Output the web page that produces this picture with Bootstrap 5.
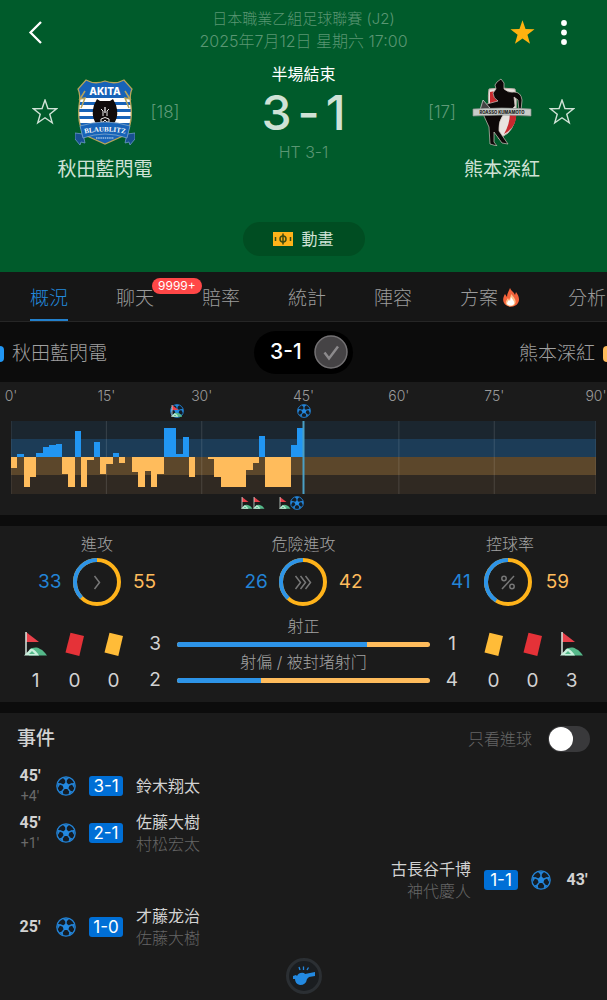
<!DOCTYPE html>
<html lang="zh-Hant">
<head>
<meta charset="utf-8">
<meta name="viewport" content="width=device-width, initial-scale=1">
<title>秋田藍閃電 3-1 熊本深紅</title>
<link href="https://cdn.jsdelivr.net/npm/bootstrap@5.3.0/dist/css/bootstrap.min.css" rel="stylesheet">
<style>
:root{--home:#2196f3;--away:#ffbc5c;--panel:#1b1b1b;--gap:#0c0c0c}
body{background:var(--panel);color:#d2d2d2;font-family:Inter,"Noto Sans CJK TC",sans-serif;font-size:16px;line-height:20px;font-weight:400;overflow-x:hidden}
svg{display:block;flex:none}
.icon-btn{background:none;border:0;padding:0;color:inherit;display:flex;align-items:center;justify-content:center}
/* header */
.match-head{background:#005b2b;color:#cfe2d6;height:272px}
.head-side{width:98px}
.league{font-size:15px;line-height:22px;color:#5a9673;font-weight:300}
.league .kickoff{font-size:16px}
.score-row{padding:0 15px;margin-top:12px}
.team-block{width:180px;padding-top:14px}
.team-block .cell{width:60px}
.rank{color:#5f9a78;font-size:17px;font-weight:300}
.team-name{font-size:19px;line-height:24px;margin-top:12px}
.big-score{font-size:48px;line-height:58px;font-weight:500;gap:6px}
.ht{color:#5a9673;font-weight:300}
.anim-btn{background:#004d22;color:#cfe2d6;border:0;border-radius:17px;width:122px;height:34px}
/* tabs */
.tab-strip{background:#161616;border-bottom:1px solid #262626;height:50px;gap:48px;padding-left:30px;overflow:hidden;white-space:nowrap}
.tab-strip a{position:relative;color:#9b9b9b;font-size:19px;line-height:24px;height:50px;padding-top:15px;text-decoration:none;flex:none;font-weight:300}
.tab-strip a.active{color:#2389dc;border-bottom:3px solid #2380cc}
.count-pill{position:absolute;left:36px;top:6px;height:16px;padding:0 6px;border-radius:8px;background:#ff4747;color:#fff;font-size:12px;line-height:16px;font-weight:400}
/* teams bar */
.teams-bar{background:var(--gap);height:60px;color:#a0a0a0;font-size:19px;line-height:24px;font-weight:300}
.teams-bar .side{padding-top:3px}
.tick{width:4px;height:16px}
.tick-home{background:var(--home);border-radius:0 4px 4px 0}
.tick-away{background:var(--away);border-radius:4px 0 0 4px}
.score-pill{background:#000;border-radius:22px;width:99px;height:43px;color:#fff;font-size:21px;font-weight:500}
/* chart */
.momentum{padding:4px 11px 21px}
.axis{display:grid;grid-template-columns:minmax(0,15fr) minmax(0,15fr) minmax(0,16fr) minmax(0,15fr) minmax(0,15fr) minmax(0,16fr) 0;font-size:14px;color:#9a9a9a;font-weight:300}
.axis span{width:30px;margin-left:-15px;text-align:center}
.plot{position:relative;margin-top:15px}
.plot>svg{width:100%;height:73px}
.marks svg{position:absolute;margin-left:-7px}
.marks .up{top:-17px}
.marks .down{top:75px}
.section-gap{background:var(--gap);height:11px}
/* stats */
.stats{padding:8px 0 11px;color:#a3a3a3;font-weight:300}
.rings{padding:0 38px}
.ring-block{width:118px}
.val{font-size:19px;line-height:24px;font-weight:400}
.val-home{color:#2384d6}
.val-away{color:var(--away)}
.tallies{padding:10px 16px 0}
.tally-group{padding-top:15px;text-align:center}
.tally{width:39px}
.tally svg{margin-bottom:12px}
.tally span,.meter-num{font-size:19px;line-height:24px;color:#d2d2d2;font-weight:400}
.tally span{display:block;height:22px}
.meter-num{width:44px;line-height:16px;text-align:center}
.meter-label{text-align:center}
.meter .progress{height:5px;border-radius:3px;background:var(--away)}
/* events */
.events{padding:13px 17px 4px}
.events h2{font-size:19px;line-height:26px;font-weight:500;margin:0;color:#d2d2d2}
.only-goals label{color:#666;font-weight:300}
.only-goals input.form-check-input{width:42px;height:26px;margin:0;border:0;background-color:#39393b;box-shadow:none;float:none;
background-image:url("data:image/svg+xml,%3csvg xmlns='http://www.w3.org/2000/svg' viewBox='-4 -4 8 8'%3e%3ccircle r='3.7' fill='%23fff'/%3e%3c/svg%3e")}
.event-list{margin-top:10px}
.event{height:47px;gap:13px}
.event time{width:26px;text-align:center;font-family:Roboto,sans-serif;font-weight:700;font-size:16px}
.event small{display:block;font-size:14px;font-weight:400;color:#6a6a6a}
.score-tag{background:#006fd6;color:#fff;border-radius:3px;width:34px;height:20px;text-align:center;font-size:17px;line-height:20px}
.names{line-height:22px}
.names div+div{color:#666;font-weight:300}
.whistle{width:36px;height:36px;border-radius:50%;border:3px solid #2b2f33;background:#1a1d20}
</style>
</head>
<body>
<svg width="0" height="0" class="position-absolute" aria-hidden="true">
  <defs>
    <symbol id="ball" viewBox="0 0 20 20">
      <circle cx="10" cy="10" r="9.2" fill="#141c24" stroke="#2383d6" stroke-width="1.3"/>
      <path d="M10 6.300l3.600 2.600-1.400 4.200H7.800L6.400 8.900z" fill="#2389e0"/>
      <path d="M10 7V4M13 9l3.200-1.200M12 12.700l2 2.700M8 12.700l-2 2.700M7 9L3.800 7.800" fill="none" stroke="#2383d6" stroke-width="1.500"/>
      <path d="M6.500 1.500h7L10 5zM18.700 6.500l-.3 6-3-4.900zM1.300 6.500l.3 6 3-4.900zM17 15.500l-4.500 3.300.9-4.400zM3 15.500l4.500 3.300-.9-4.400z" fill="#2383d6"/>
    </symbol>
    <symbol id="corner" viewBox="0 0 24 24">
      <path d="M2 0l13 10H2z" fill="#e8404a"/>
      <path d="M2 0v23" stroke="#d8e8e0" stroke-width="1.500"/>
      <path d="M5 18c4-3 8-3 11-1 3 1 5 4 7 6.500H5z" fill="#55b98a"/>
      <path d="M0 23.500l7-7c4 1 6 4 8 7z" fill="#c9f0dd"/>
      <path d="M5 22l3-3 3 3z" fill="#55b98a"/>
    </symbol>
    <symbol id="cardface" viewBox="0 0 24 24"><path d="M7.500 .7L21 4 16.300 24 2.500 20.600z" fill="currentColor"/></symbol>
    <symbol id="star" viewBox="0 0 24 24"><path d="M12 1l2.700 7.800 8 .2-6.300 5 2.300 8L12 17.300 5.300 22l2.300-8-6.300-5 8-.2z"/></symbol>
  </defs>
</svg>

<header class="match-head d-flex flex-column">
  <div class="d-flex justify-content-between align-items-start pt-2">
    <div class="head-side ps-4 pt-2">
      <button class="icon-btn" aria-label="返回"><svg width="24" height="32" viewBox="0 0 24 32"><path d="M17 6L6.500 16.500 17 27" fill="none" stroke="#fff" stroke-width="2.300"/></svg></button>
    </div>
    <div class="league text-center"><div>日本職業乙組足球聯賽 (J2)</div><div class="kickoff">2025年7月12日 星期六 17:00</div></div>
    <div class="head-side d-flex pt-2 gap-3">
      <button class="icon-btn" aria-label="收藏比賽"><svg width="28" height="32" viewBox="0 -4 28 32" fill="#ffb20f"><use href="#star" width="27" height="27" y="-1"/></svg></button>
      <button class="icon-btn px-1" aria-label="更多"><svg width="14" height="32" viewBox="0 0 14 32" fill="#fff"><circle cx="7" cy="7" r="2.900"/><circle cx="7" cy="16.500" r="2.900"/><circle cx="7" cy="26" r="2.900"/></svg></button>
    </div>
  </div>
  <div class="score-row d-flex justify-content-between">
    <div class="team-block">
      <div class="d-flex align-items-center">
        <div class="cell d-flex justify-content-center"><button class="icon-btn" aria-label="關注秋田藍閃電"><svg width="26" height="26" viewBox="0 0 24 24" fill="none" stroke="#cfe2d6" stroke-width="1.300"><use href="#star"/></svg></button></div>
        <svg width="60" height="68" viewBox="0 0 60 68" role="img" aria-label="秋田藍閃電">
          <defs><clipPath id="shield"><path d="M11 2q9 5 19 1 10 4 19-1l8 9q-3 6-1 17 2 22-8 30-9 4-18 8-9-4-18-8-10-8-8-30 2-11-1-17z"/></clipPath></defs>
          <g clip-path="url(#shield)">
            <path d="M0 0h60v68H0z" fill="#1763b8"/>
            <path d="M0 20h60v4H0zM0 27h60v4H0zM0 34h60v4H0zM0 41h60v4H0z" fill="#fff"/>
          </g>
          <path d="M11 2q9 5 19 1 10 4 19-1l8 9q-3 6-1 17 2 22-8 30-9 4-18 8-9-4-18-8-10-8-8-30 2-11-1-17z" fill="none" stroke="#b7a45a" stroke-width="1.300"/>
          <path d="M10 13l-5 8 5-1-4 10M50 13l5 8-5-1 4 10" fill="none" stroke="#b7a45a" stroke-width="1.500"/>
          <path d="M19 27l3-6 3 2h10l3-2 3 6q3 10-1 17-4 5-10 5t-10-5q-4-7-1-17z" fill="#100c0c"/>
          <path d="M26 31l2 2v5M34 31l-2 2v5M26 41q4-3 8 0v3h-2l-2-2-2 2h-2z" fill="none" stroke="#e9e9e9" stroke-width="1"/>
          <path d="M30 29v6" stroke="#fff" stroke-width="1.200"/>
          <path d="M0 55l8 1 2 9-4-1-1 3-5-6zM60 55l-8 1-2 9 4-1 1 3 5-6z" fill="#174f91" stroke="#6c9bc8" stroke-width=".8"/>
          <path d="M5 48q25-8 50 0l-3 12q-22-8-44 0z" fill="#1763b8" stroke="#82a7cc" stroke-width=".8"/>
          <path id="scroll" d="M4 57q26-7 52 0" fill="none"/>
          <text x="30" y="17" text-anchor="middle" font-family="Inter,sans-serif" font-size="10" font-weight="800" fill="#fff">AKITA</text>
          <text font-family="Liberation Serif,serif" font-size="7" font-weight="700" fill="#fff"><textPath href="#scroll" startOffset="50%" text-anchor="middle">BLAUBLITZ</textPath></text>
          <path d="M21 60h18" stroke="#9fc0e0" stroke-width="1.500" stroke-dasharray="1.500 .7"/>
        </svg>
        <div class="cell rank text-center">[18]</div>
      </div>
      <div class="team-name text-center">秋田藍閃電</div>
    </div>
    <div class="text-center">
      <div class="text-white">半場結束</div>
      <div class="big-score d-flex justify-content-center"><span>3</span><span>-</span><span>1</span></div>
      <div class="ht">HT 3-1</div>
    </div>
    <div class="team-block">
      <div class="d-flex align-items-center">
        <div class="cell rank text-center">[17]</div>
        <svg width="60" height="68" viewBox="0 0 60 68" role="img" aria-label="熊本深紅">
          <path d="M17 11q12-2 26 0 2 10 1 22 0 14-8 22l-9 6-8-20q-4-18-2-30z" fill="#e9e4e0" stroke="#b9aea5"/>
          <path d="M18 14q5-2 8 3 0 8-2 14h-6zM44 34q2 14-12 22 6-10 6-22z" fill="#c8292e"/>
          <path d="M25 4l4-3 3 4v6q4 4 10 3 7 0 8 8l-1 11h-2l-1-11-4-3 1 9-6 6-6 3q-5 7-4 16l9 13-6-1-8-11v10l3 4-7-2-1-17-5-11q-2-8 3-12l11-3q-5-3-5-8l3-4-1-4z" fill="#0d0808" stroke="#cfc4bd" stroke-width=".7"/>
          <path d="M11 22l7 8-10 2z" fill="#444" stroke="#ddd" stroke-width=".7"/>
          <path d="M1 31q29-2 58 0v7q-29-2-58 0z" fill="#c9cdca" stroke="#8d918e" stroke-width=".7"/>
          <text x="30" y="36" text-anchor="middle" font-family="Inter,sans-serif" font-size="4.200" font-weight="800" fill="#222">ROASSO KUMAMOTO</text>
        </svg>
        <div class="cell d-flex justify-content-center"><button class="icon-btn" aria-label="關注熊本深紅"><svg width="26" height="26" viewBox="0 0 24 24" fill="none" stroke="#cfe2d6" stroke-width="1.300"><use href="#star"/></svg></button></div>
      </div>
      <div class="team-name text-center">熊本深紅</div>
    </div>
  </div>
  <button class="anim-btn d-flex align-items-center justify-content-center gap-2 mx-auto mt-auto mb-3">
    <svg width="20" height="14" viewBox="0 0 20 14"><path d="M0 0h20v14H0z" fill="#ffb31a"/><path d="M10 1.500v11M2.500 5v4M17.500 5v4" stroke="#3d4a10" stroke-width="1.500"/><circle cx="10" cy="7" r="3" fill="none" stroke="#3d4a10" stroke-width="1.500"/></svg>
    動畫
  </button>
</header>

<nav class="tab-strip d-flex">
  <a href="#" class="active">概況</a>
  <a href="#">聊天<span class="count-pill">9999+</span></a>
  <a href="#">賠率</a>
  <a href="#">統計</a>
  <a href="#">陣容</a>
  <a href="#" class="d-flex gap-1">方案<svg width="18" height="20" viewBox="0 0 18 20"><path d="M8 1c1 3 4 4 5 7l1-3c3 4 4 8 2 11-3 5-11 5-14 0-2-4 0-7 1-9l2 3c0-4 2-6 3-9z" fill="#f4623a"/><path d="M9 7c3 3 6 7 4 10-2 3-7 3-9 0-1-3 1-4 2-6l1 2c1-2 2-4 2-6z" fill="#ffc08a"/><path d="M9 10c2 3 4 5 3 7-2 2-5 2-7 0 0-2 1-3 2-4l1 1z" fill="#fff"/></svg></a>
  <a href="#">分析</a>
</nav>

<main>
  <div class="teams-bar d-flex align-items-center justify-content-between">
    <div class="side d-flex align-items-center gap-2 col"><span class="tick tick-home"></span>秋田藍閃電</div>
    <div class="score-pill d-flex align-items-center justify-content-between ps-3 pe-1">3-1
      <svg width="36" height="36" viewBox="0 0 36 36"><circle cx="18" cy="18" r="16" fill="#454345" stroke="#737173" stroke-width="1.500"/><path d="M11.500 18.500l4.500 6 9-12" fill="none" stroke="#8c8a8c" stroke-width="2.500"/></svg>
    </div>
    <div class="side d-flex align-items-center justify-content-end gap-2 col">熊本深紅<span class="tick tick-away"></span></div>
  </div>

  <section class="momentum" aria-label="進攻走勢">
    <div class="axis"><span>0'</span><span>15'</span><span>30'</span><span>45'</span><span>60'</span><span>75'</span><span>90'</span></div>
    <div class="plot">
      <svg viewBox="0 0 92 73" preserveAspectRatio="none">
        <path d="M0 0h92v18H0z" fill="#1b262f"/><path d="M0 18h92v18H0z" fill="#1c3c57"/>
        <path d="M0 36h92V54H0z" fill="#5c472b"/><path d="M0 54h92v19H0z" fill="#302922"/>
        <path d="M0 0v73M15 0v73M30 0v73M61 0v73M76 0v73M92 0v73" stroke="#fff" stroke-opacity=".13" vector-effect="non-scaling-stroke"/>
        <g shape-rendering="crispEdges">
          <path fill="#2196f3" d="M1 36v-3h1v3zM4 36v-4h1v-6h1v-2h1v-1h1v13zM10 36v-26h1v26zM13 36v-15h1v15zM16 36v-4h1v4zM24 36v-29h2v26h1v-17h1v20zM39 36v-21h1v21zM44 36v-12h1v-17h1v29z"/>
          <path fill="#2196f3" d="M7 23h1v13h-1z"/>
          <path fill="#ffbc5c" d="M0 36v11h1v-11zM2 36v30h1v-10h1v-20h-2zM8 36v17h1v13h1v-30zM11 36v30h1v-27h1v-3zM14 36v17h1v-10h1v-7zM17 36v6h1v-6zM19 36v15h1v15h1v-16h1v16h1v-13h1v-17zM28 36v20h1v-20zM31 36v2h1v18h1v10h4v-17h1v-7h1v-6zM40 36v30h4v-30z"/>
        </g>
        <path d="M46 0v73" stroke="#4a9fc4" stroke-width="2" vector-effect="non-scaling-stroke"/>
      </svg>
      <div class="marks">
        <svg class="up" width="14" height="14" style="left:28.3%"><use href="#ball"/></svg>
        <svg class="up" width="12" height="14" viewBox="-2 0 24 24" style="left:28.3%"><use href="#corner" width="24" height="24"/></svg>
        <svg class="up" width="14" height="14" style="left:50%"><use href="#ball"/></svg>
        <svg class="down" width="12" height="14" style="left:40.5%"><use href="#corner"/></svg>
        <svg class="down" width="12" height="14" style="left:42.6%"><use href="#corner"/></svg>
        <svg class="down" width="12" height="14" style="left:47%"><use href="#corner"/></svg>
        <svg class="down" width="14" height="14" style="left:48.9%"><use href="#ball"/></svg>
      </div>
    </div>
  </section>
  <div class="section-gap"></div>

  <section class="stats">
    <div class="rings d-flex justify-content-between">
      <div class="ring-block text-center">
        <div>進攻</div>
        <div class="d-flex align-items-center justify-content-between mt-1">
          <span class="val val-home">33</span>
          <svg width="48" height="48" viewBox="0 0 48 48"><g fill="none" stroke-width="4"><circle cx="24" cy="24" r="22" stroke="#ffb31a"/><circle cx="24" cy="24" r="22" stroke="#2d94e8" pathLength="100" stroke-dasharray="37.500 100" transform="rotate(-225 24 24)"/></g><path d="M21.500 18l5 6.500-5 6.500" fill="none" stroke="#777" stroke-width="1.500"/></svg>
          <span class="val val-away">55</span>
        </div>
      </div>
      <div class="ring-block text-center">
        <div>危險進攻</div>
        <div class="d-flex align-items-center justify-content-between mt-1">
          <span class="val val-home">26</span>
          <svg width="48" height="48" viewBox="0 0 48 48"><g fill="none" stroke-width="4"><circle cx="24" cy="24" r="22" stroke="#ffb31a"/><circle cx="24" cy="24" r="22" stroke="#2d94e8" pathLength="100" stroke-dasharray="38.200 100" transform="rotate(-227.600 24 24)"/></g><path d="M16.500 18l5 6.500-5 6.500M21.500 18l5 6.500-5 6.500M26.500 18l5 6.500-5 6.500" fill="none" stroke="#777" stroke-width="1.500"/></svg>
          <span class="val val-away">42</span>
        </div>
      </div>
      <div class="ring-block text-center">
        <div>控球率</div>
        <div class="d-flex align-items-center justify-content-between mt-1">
          <span class="val val-home">41</span>
          <svg width="48" height="48" viewBox="0 0 48 48"><g fill="none" stroke-width="4"><circle cx="24" cy="24" r="22" stroke="#ffb31a"/><circle cx="24" cy="24" r="22" stroke="#2d94e8" pathLength="100" stroke-dasharray="41 100" transform="rotate(-237.600 24 24)"/></g><g fill="none" stroke="#777" stroke-width="1.500"><path d="M30 18L18 31"/><circle cx="20" cy="20.500" r="2.200"/><circle cx="28" cy="28.500" r="2.200"/></g></svg>
          <span class="val val-away">59</span>
        </div>
      </div>
    </div>

    <div class="tallies d-flex">
      <div class="tally-group d-flex">
        <div class="tally"><svg class="mx-auto" width="24" height="26"><use href="#corner"/></svg><span>1</span></div>
        <div class="tally"><svg class="mx-auto" width="24" height="26" color="#e53238"><use href="#cardface"/></svg><span>0</span></div>
        <div class="tally"><svg class="mx-auto" width="24" height="26" color="#ffbc38"><use href="#cardface"/></svg><span>0</span></div>
      </div>
      <div class="flex-grow-1">
        <div class="meter">
          <div class="meter-label">射正</div>
          <div class="d-flex align-items-center"><span class="meter-num">3</span><div class="progress flex-grow-1"><div class="progress-bar" style="width:75%;background:#2d94e8"></div></div><span class="meter-num">1</span></div>
        </div>
        <div class="meter">
          <div class="meter-label">射偏 / 被封堵射门</div>
          <div class="d-flex align-items-center"><span class="meter-num">2</span><div class="progress flex-grow-1"><div class="progress-bar" style="width:33.3%;background:#2d94e8"></div></div><span class="meter-num">4</span></div>
        </div>
      </div>
      <div class="tally-group d-flex">
        <div class="tally"><svg class="mx-auto" width="24" height="26" color="#ffbc38"><use href="#cardface"/></svg><span>0</span></div>
        <div class="tally"><svg class="mx-auto" width="24" height="26" color="#e53238"><use href="#cardface"/></svg><span>0</span></div>
        <div class="tally"><svg class="mx-auto" width="24" height="26"><use href="#corner"/></svg><span>3</span></div>
      </div>
    </div>
  </section>
  <div class="section-gap"></div>

  <section class="events">
    <div class="d-flex justify-content-between align-items-center">
      <h2>事件</h2>
      <div class="only-goals form-switch d-flex align-items-center gap-3 p-0 m-0">
        <label for="onlyGoals">只看進球</label>
        <input class="form-check-input" type="checkbox" role="switch" id="onlyGoals">
      </div>
    </div>
    <div class="event-list">
      <div class="event d-flex align-items-center"><time>45'<small>+4'</small></time><svg width="20" height="20"><use href="#ball"/></svg><span class="score-tag">3-1</span><div class="names"><div>鈴木翔太</div></div></div>
      <div class="event d-flex align-items-center"><time>45'<small>+1'</small></time><svg width="20" height="20"><use href="#ball"/></svg><span class="score-tag">2-1</span><div class="names"><div>佐藤大樹</div><div>村松宏太</div></div></div>
      <div class="event d-flex align-items-center flex-row-reverse"><time>43'</time><svg width="20" height="20"><use href="#ball"/></svg><span class="score-tag">1-1</span><div class="names text-end"><div>古長谷千博</div><div>神代慶人</div></div></div>
      <div class="event d-flex align-items-center"><time>25'</time><svg width="20" height="20"><use href="#ball"/></svg><span class="score-tag">1-0</span><div class="names"><div>才藤龙治</div><div>佐藤大樹</div></div></div>
    </div>
    <button class="icon-btn whistle mx-auto mt-2" aria-label="開賽"><svg width="26" height="24" viewBox="0 0 26 24"><path d="M2 12l3-1 1 1q2-4 7-3l1 1 10-2v4l-6 1-2 2q-1 6-7 6-5-1-5-6l-2 0z" fill="#2389e0"/><path d="M9 6L8 3M12.500 6V2.500M16 6l1.500-2.500" stroke="#2389e0" stroke-width="1.300"/></svg></button>
  </section>
</main>
<script src="https://cdn.jsdelivr.net/npm/bootstrap@5.3.0/dist/js/bootstrap.bundle.min.js"></script>
</body>
</html>
